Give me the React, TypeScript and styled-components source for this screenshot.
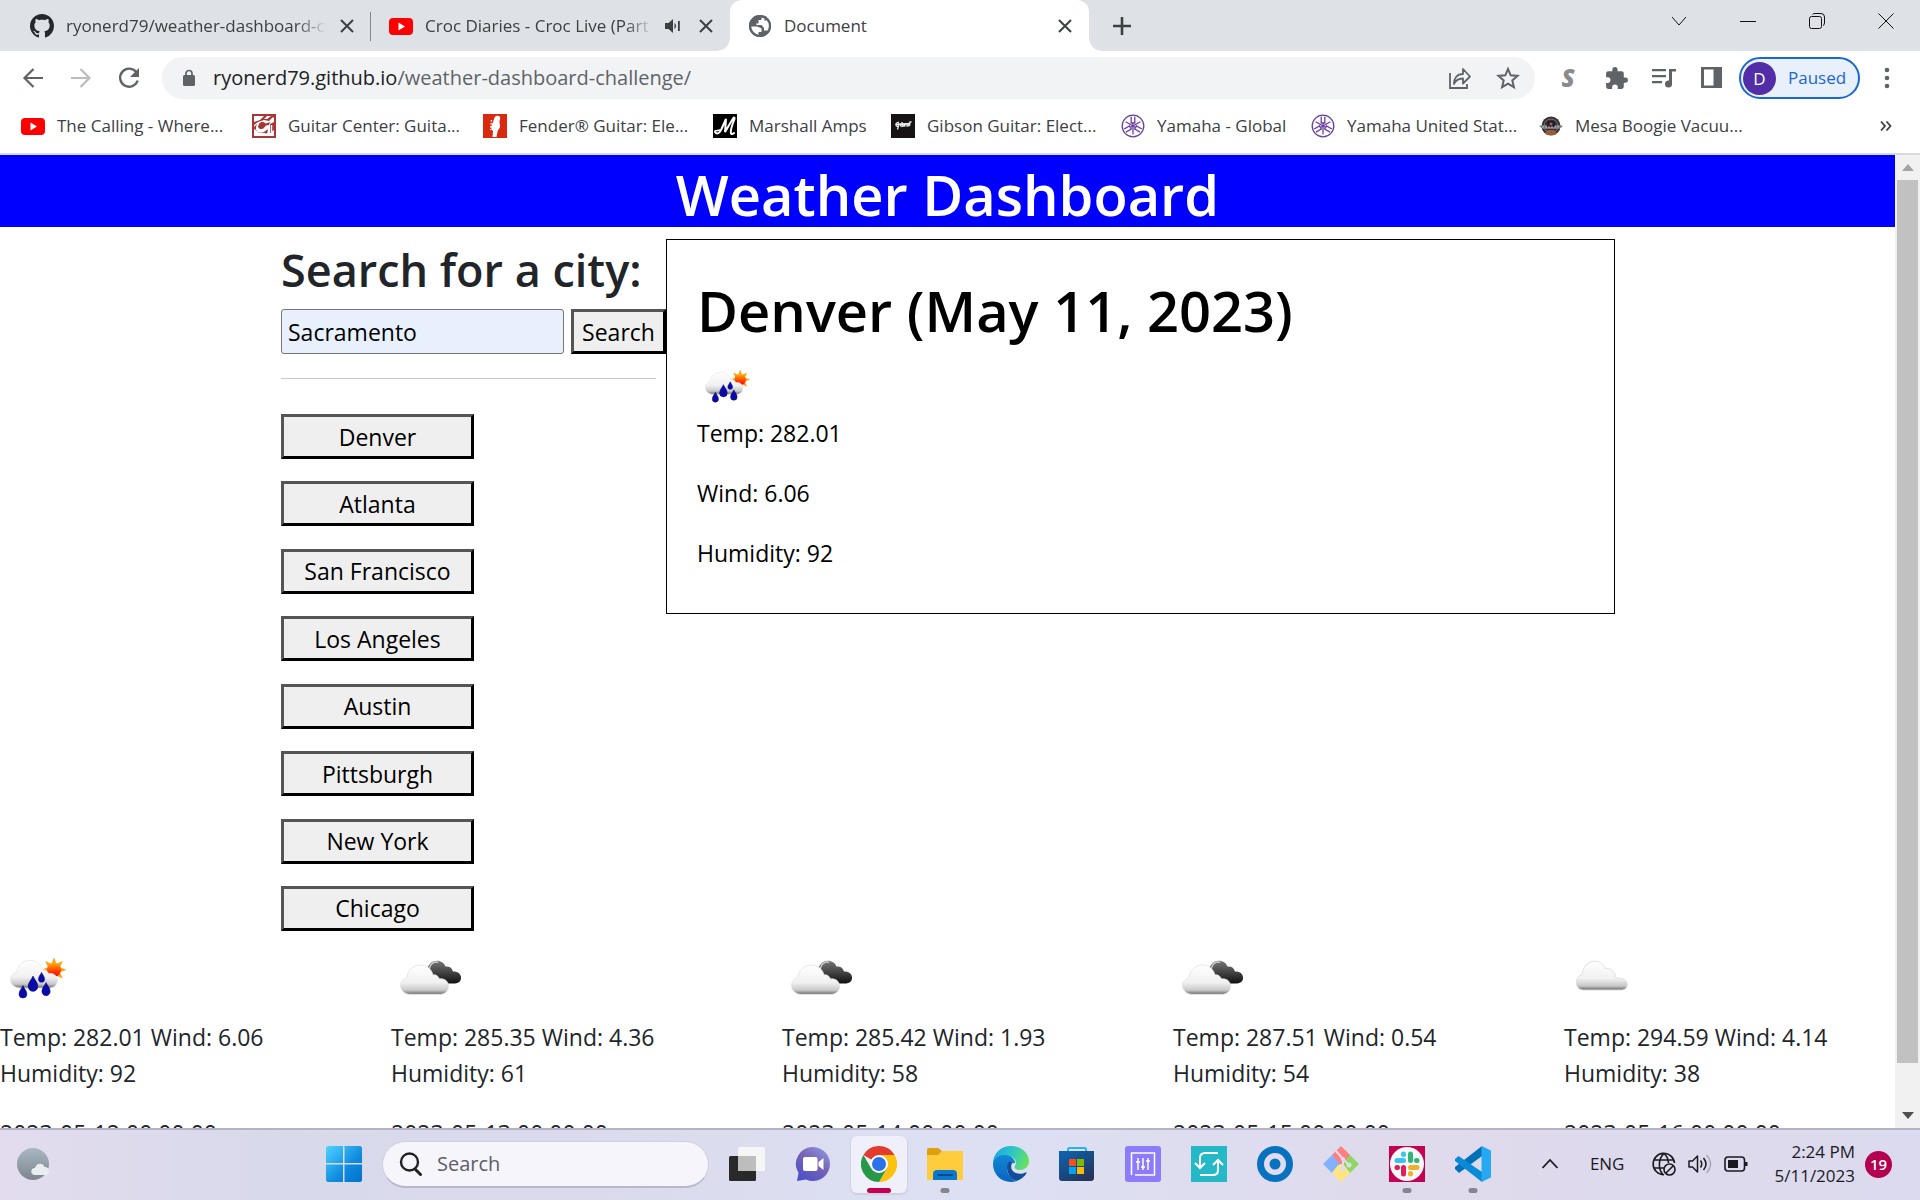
import React, { useId } from "react";
import styled, { createGlobalStyle, css } from "styled-components";

const GlobalStyle = createGlobalStyle`
  *, *::before, *::after { box-sizing: border-box; }
  body { margin: 0; background: #fff; font-family: "Open Sans", "Noto Sans", sans-serif; }
  h1, h2, p, ul { margin: 0; padding: 0; }
  button, input { font: inherit; color: inherit; margin: 0; }
  svg { display: block; flex: none; }
`;

/* ---------- shell ---------- */

const Shell = styled.div`
  display: grid;
  grid-template-columns: minmax(0, 1fr);
  grid-template-rows: auto minmax(0, 1fr) auto;
  height: 100vh;
  overflow: hidden;
`;

const IconButton = styled.button<{ $color?: string }>`
  display: flex;
  align-items: center;
  justify-content: center;
  width: 24px;
  height: 24px;
  padding: 0;
  border: 0;
  background: none;
  color: ${(p) => p.$color ?? "#5f6368"};
  flex: none;
`;

/* ---------- tab strip ---------- */

const TabStrip = styled.div`
  display: flex;
  align-items: stretch;
  height: 51px;
  padding-left: 12px;
  background: #dee1e6;
  color: #3c4043;
`;

const Tab = styled.div<{ $active?: boolean; $divided?: boolean }>`
  position: relative;
  display: flex;
  align-items: center;
  gap: 12px;
  flex: 0 1 359px;
  min-width: 0;
  padding: 0 16px 0 18px;
  font-size: 17px;
  line-height: 24px;
  ${(p) =>
    p.$divided &&
    css`
      &::after {
        content: "";
        position: absolute;
        right: 0;
        top: 12px;
        width: 1px;
        height: 29px;
        background: #80868b;
      }
    `}
  ${(p) =>
    p.$active &&
    css`
      background: #fff;
      border-radius: 12px 12px 0 0;
      &::before,
      &::after {
        content: "";
        position: absolute;
        bottom: 0;
        width: 12px;
        height: 12px;
      }
      &::before {
        left: -12px;
        background: radial-gradient(circle at 0 0, transparent 11px, #fff 12px);
      }
      &::after {
        right: -12px;
        background: radial-gradient(circle at 100% 0, transparent 11px, #fff 12px);
      }
    `}
`;

const TabTitle = styled.span<{ $fade?: boolean }>`
  flex: 1;
  min-width: 0;
  overflow: hidden;
  white-space: nowrap;
  ${(p) => p.$fade && css`mask-image: linear-gradient(90deg, #000 88%, transparent);`}
`;

const TabActions = styled.div`
  display: flex;
  gap: 17px;
`;

const TabButton = styled(IconButton)`
  width: 16px;
`;

const NewTab = styled(IconButton)`
  align-self: center;
  margin-left: 21px;
`;

const WindowControls = styled.div`
  display: flex;
  align-items: center;
  gap: 45px;
  height: 42px;
  margin-left: auto;
  padding-right: 22px;
`;

/* ---------- toolbar ---------- */

const Toolbar = styled.div`
  display: flex;
  align-items: center;
  height: 54px;
  padding: 0 21px;
  background: #fff;
`;

const ToolGroup = styled.div`
  display: flex;
  align-items: center;
  gap: 24px;
`;

const AddressBar = styled.div`
  display: flex;
  align-items: center;
  gap: 18px;
  flex: 1;
  min-width: 0;
  height: 42px;
  margin: 0 21px;
  padding: 0 15px 0 21px;
  border-radius: 21px;
  background: #f1f3f4;
`;

const Url = styled.span`
  flex: 1;
  min-width: 0;
  overflow: hidden;
  white-space: nowrap;
  font-size: 20px;
  line-height: 30px;
  color: #5f6368;
  b { font-weight: 400; color: #202124; }
`;

const ProfileButton = styled.button`
  display: flex;
  align-items: center;
  gap: 12px;
  width: 121px;
  height: 42px;
  margin: 0 15px;
  padding: 0 0 0 2px;
  border: 2px solid #1a67d2;
  border-radius: 21px;
  background: #e8f0fb;
  color: #1967d2;
  font-size: 17px;
  line-height: 24px;
`;

const Avatar = styled.span`
  width: 33px;
  height: 33px;
  border-radius: 50%;
  background: #512da8;
  color: #fff;
  font-size: 17px;
  line-height: 33px;
  text-align: center;
`;

/* ---------- bookmarks ---------- */

const BookmarkBar = styled.nav`
  display: flex;
  align-items: center;
  height: 50px;
  padding: 0 22px 6px 21px;
  border-bottom: 2px solid #d9dadc;
  background: #fff;
  color: #3c4043;
  font-size: 17px;
  line-height: 24px;
`;

const Bookmark = styled.a<{ $width: number }>`
  display: flex;
  align-items: center;
  gap: 12px;
  flex: 0 1 ${(p) => p.$width}px;
  min-width: 0;
  color: inherit;
  text-decoration: none;
  white-space: nowrap;
`;

const MoreBookmarks = styled(IconButton)`
  margin-left: auto;
`;

/* ---------- page ---------- */

const Viewport = styled.div`
  display: flex;
  min-height: 0;
`;

const Page = styled.main`
  flex: 1;
  min-width: 0;
  overflow: hidden;
  background: #fff;
  color: #212529;
  font-size: 23px;
  line-height: 36px;
`;

const Banner = styled.h1`
  background: #00f;
  color: #fff;
  font-size: 56px;
  font-weight: 600;
  line-height: 72px;
  height: 72px;
  padding-top: 3px;
  text-align: center;
`;

const Columns = styled.div`
  display: flex;
  align-items: flex-start;
  padding: 12px 0 0 281px;
`;

const Sidebar = styled.section`
  flex: 0 0 385px;
  min-width: 0;
  padding-top: 2px;
`;

const SearchTitle = styled.h2`
  font-size: 45px;
  font-weight: 600;
  line-height: 58px;
  white-space: nowrap;
`;

const SearchForm = styled.form`
  display: flex;
  gap: 7px;
  width: 385px;
  margin-top: 10px;
`;

const CityInput = styled.input`
  flex: 1;
  width: 0;
  min-width: 0;
  height: 45px;
  padding: 0 6px;
  border: 1px solid #767676;
  border-radius: 3px;
  background: #e8f0fe;
  color: #000;
`;

const ClassicButton = styled.button<{ $width: number }>`
  width: ${(p) => p.$width}px;
  height: 45px;
  padding: 0;
  border: 3px solid;
  border-color: #555 #000 #000 #555;
  background: #efefef;
  color: #000;
  line-height: 36px;
`;

const Rule = styled.hr`
  height: 1px;
  margin: 24px 10px 35px 0;
  border: 0;
  background: #c8c9ca;
`;

const History = styled.ul`
  display: flex;
  flex-direction: column;
  justify-content: space-between;
  height: 517px;
  list-style: none;
  li { display: flex; }
`;

const Current = styled.section`
  flex: 0 1 949px;
  height: 375px;
  padding: 37px 30px;
  border: 1px solid #000;
  color: #000;
`;

const CurrentTitle = styled.h2`
  font-size: 56px;
  font-weight: 600;
  line-height: 66px;
`;

const CurrentIcon = styled.div`
  display: flex;
  align-items: flex-end;
  height: 72px;
`;

const Reading = styled.p`
  line-height: 36px;
  margin-bottom: 24px;
`;

const Forecast = styled.section`
  display: grid;
  grid-template-columns: repeat(5, minmax(0, 1fr));
  column-gap: 60px;
  margin-top: 8px;
`;

const ForecastDay = styled.article`
  p { padding-right: 50px; margin-bottom: 24px; }
`;

const ForecastIcon = styled.div`
  height: 80px;
`;

/* ---------- scrollbar ---------- */

const ScrollTrack = styled.div`
  display: flex;
  flex-direction: column;
  align-items: center;
  flex: 0 0 25px;
  background: #f1f1f1;
`;

const ScrollThumb = styled.div`
  width: 21px;
  flex: 0 1 883px;
  background: #c1c1c1;
`;

const ScrollArrow = styled(IconButton)<{ $end?: boolean }>`
  height: 25px;
  margin-top: ${(p) => (p.$end ? "auto" : 0)};
`;

/* ---------- taskbar ---------- */

const Taskbar = styled.footer`
  display: flex;
  align-items: center;
  height: 72px;
  padding: 0 28px 2px 16px;
  border-top: 2px solid #b4b3c6;
  background: linear-gradient(90deg, #e2dcee 0, #d8d9eb 14%, #dadaec 30%, #dde0f3 50%, #dfdaec 75%, #dcdaee 100%);
  color: #1b1b1f;
`;

const Widgets = styled.div`
  flex: 0 0 300px;
`;

const Apps = styled.div`
  display: flex;
  align-items: center;
  gap: 10px;
`;

const AppButton = styled.button<{ $active?: boolean }>`
  position: relative;
  display: flex;
  align-items: center;
  justify-content: center;
  width: 56px;
  height: 57px;
  padding: 0;
  border: 0;
  border-radius: 6px;
  background: ${(p) => (p.$active ? "#f0f0fa" : "none")};
  box-shadow: ${(p) => (p.$active ? "0 1px 1px 1px #d0d0e2" : "none")};
`;

const RunMark = styled.span<{ $active?: boolean }>`
  position: absolute;
  bottom: 0;
  left: 50%;
  transform: translateX(-50%);
  width: ${(p) => (p.$active ? 24 : 9)}px;
  height: 5px;
  border-radius: 3px;
  background: ${(p) => (p.$active ? "#c30052" : "#85848f")};
`;

const TaskSearch = styled.label`
  display: flex;
  align-items: center;
  gap: 14px;
  width: 327px;
  height: 47px;
  padding: 0 20px 0 16px;
  border: 1px solid #cfcfe0;
  border-bottom: 2px solid #b9b8cb;
  border-radius: 24px;
  background: #f5f5fb;
  input {
    width: 100%;
    padding: 0;
    border: 0;
    outline: 0;
    background: none;
    font-size: 20px;
    line-height: 30px;
  }
  input::placeholder { color: #5e5e66; opacity: 1; }
`;

const Tray = styled.div`
  display: flex;
  align-items: center;
  margin-left: auto;
`;

const TrayIcons = styled.div`
  display: flex;
  align-items: center;
  gap: 12px;
  margin: 0 26px 0 28px;
`;

const Language = styled.span`
  margin-left: 32px;
  font-size: 17px;
  line-height: 24px;
`;

const Clock = styled.time`
  font-size: 17px;
  line-height: 24px;
  text-align: right;
  span { display: block; }
`;

const Badge = styled.span`
  width: 27px;
  height: 27px;
  margin-left: 10px;
  border-radius: 50%;
  background: #b4004e;
  color: #fff;
  font-size: 15px;
  font-weight: 600;
  line-height: 27px;
  text-align: center;
`;

/* ---------- drawings ---------- */

const CloseIcon = () => (
  <svg width="16" height="16" viewBox="0 0 16 16" fill="none" stroke="#3c4043" strokeWidth="2">
    <path d="M2 2l12 12M14 2L2 14" />
  </svg>
);

const GithubIcon = () => (
  <svg width="24" height="24" viewBox="0 0 16 16" fill="#24292f">
    <path d="M8 0C3.58 0 0 3.58 0 8c0 3.54 2.29 6.53 5.47 7.59.4.07.55-.17.55-.38 0-.19-.01-.82-.01-1.49-2.01.37-2.53-.49-2.69-.94-.09-.23-.48-.94-.82-1.13-.28-.15-.68-.52-.01-.53.63-.01 1.08.58 1.23.82.72 1.21 1.87.87 2.33.66.07-.52.28-.87.51-1.07-1.78-.2-3.64-.89-3.64-3.95 0-.87.31-1.59.82-2.15-.08-.2-.36-1.02.08-2.12 0 0 .67-.21 2.2.82.64-.18 1.32-.27 2-.27s1.36.09 2 .27c1.53-1.04 2.2-.82 2.2-.82.44 1.1.16 1.92.08 2.12.51.56.82 1.27.82 2.15 0 3.07-1.87 3.75-3.65 3.95.29.25.54.73.54 1.48 0 1.07-.01 1.93-.01 2.2 0 .21.15.46.55.38A8.01 8.01 0 0016 8c0-4.42-3.58-8-8-8z" />
  </svg>
);

const YoutubeIcon = () => (
  <svg width="24" height="24" viewBox="0 0 24 24">
    <rect y="4" width="24" height="17" rx="4" fill="#f00" />
    <path d="M9.500 8.500v8l6.500-4z" fill="#fff" />
  </svg>
);

const GlobeIcon = () => (
  <svg width="24" height="24" viewBox="0 0 24 24">
    <circle cx="12" cy="12" r="11" fill="#5f6368" />
    <path d="M3 12.500h6.500l4 2v3.500h-3v3C6 20 3 17 3 12.500zM13.500 3.500v2.500h-3v3.500H8l.5 1.500h5l2.500 3v2.500h2.500l1 1c2.500-3 3-8-.5-11.500l-2.500 1V4.500z" fill="#fff" />
    <circle cx="12" cy="12" r="10" fill="none" stroke="#5f6368" strokeWidth="2.200" />
  </svg>
);

const AudioIcon = () => (
  <svg width="16" height="16" viewBox="0 0 16 16" fill="#3c4043">
    <path d="M0 5h3.500L8 1v14l-4.500-4H0zM9.500 5c2 1 2 5 0 6zM13 3h1.800v10H13z" />
  </svg>
);

const BackIcon = () => (
  <svg width="24" height="24" viewBox="0 0 24 24" fill="none" stroke="currentColor" strokeWidth="2.200">
    <path d="M22 12H3.500M12.500 3l-9 9 9 9" />
  </svg>
);
const ForwardIcon = () => (
  <svg width="24" height="24" viewBox="0 0 24 24" fill="none" stroke="currentColor" strokeWidth="2.200">
    <path d="M2 12h18.500M11.500 3l9 9-9 9" />
  </svg>
);
const ReloadIcon = () => (
  <svg width="24" height="24" viewBox="0 0 24 24">
    <path d="M19.500 6.500A9 9 0 1020.700 14.500" fill="none" stroke="currentColor" strokeWidth="2.300" />
    <path d="M22 2v9h-9z" fill="currentColor" />
  </svg>
);
const LockIcon = () => (
  <svg width="12" height="18" viewBox="0 0 12 18">
    <rect y="6" width="12" height="11" rx="1.500" fill="#5f6368" />
    <path d="M3 7V4.500a3 3 0 016 0V7" fill="none" stroke="#5f6368" strokeWidth="1.700" />
  </svg>
);
const ShareIcon = () => (
  <svg width="24" height="24" viewBox="0 0 24 24" fill="none" stroke="#5f6368" strokeWidth="1.800">
    <path d="M2 7v15h17v-4" />
    <path d="M6 18c0-6 3-10 9-10V3l7 7.500-7 7v-5c-4 0-7 1-9 5.500z" strokeLinejoin="round" />
  </svg>
);
const StarIcon = () => (
  <svg width="24" height="24" viewBox="0 0 24 24" fill="none" stroke="#5f6368" strokeWidth="2">
    <path d="M12 3l2.700 6.300 6.800.6-5.200 4.500 1.600 6.700-5.900-3.500-5.900 3.500 1.600-6.700-5.200-4.500 6.800-.6z" />
  </svg>
);
const LetterS = styled.span`
  font-family: "Open Sans", sans-serif;
  font-size: 24px;
  font-weight: 800;
  font-style: italic;
  line-height: 24px;
  color: #8b8b8b;
`;
const PuzzleIcon = () => (
  <svg width="25" height="25" viewBox="0 0 24 24" fill="currentColor">
    <path d="M20.500 11H19V7a2 2 0 00-2-2h-4V3.500a2.500 2.500 0 00-5 0V5H4a2 2 0 00-2 2v3.800h1.500a2.700 2.700 0 010 5.400H2V20a2 2 0 002 2h3.800v-1.500a2.700 2.700 0 015.400 0V22H17a2 2 0 002-2v-4h1.500a2.500 2.500 0 000-5z" />
  </svg>
);
const QueueIcon = () => (
  <svg width="24" height="24" viewBox="0 0 24 24" fill="currentColor">
    <path d="M0 3h14v2.200H0zM0 9h14v2.200H0zM0 15h10v2.200H0z" />
    <path d="M17 3h7v2.500h-4V18h-3z" />
    <circle cx="16.500" cy="18" r="3.500" />
  </svg>
);
const PanelIcon = () => (
  <svg width="24" height="24" viewBox="0 0 24 24">
    <rect x="1" y="1" width="21" height="21" fill="#5f6368" />
    <rect x="4" y="3.500" width="9.500" height="16" fill="#fff" />
  </svg>
);
const DotsIcon = () => (
  <svg width="24" height="24" viewBox="0 0 24 24" fill="currentColor">
    <circle cx="12" cy="4" r="2.300" />
    <circle cx="12" cy="12" r="2.300" />
    <circle cx="12" cy="20" r="2.300" />
  </svg>
);

const GuitarCenterIcon = () => (
  <svg width="24" height="24" viewBox="0 0 24 24">
    <rect width="24" height="24" fill="#a93636" />
    <path d="M2 2h10L8 6 2 8zM15 2h4l-4 3h-3zM2 11l4-3 6-2 5 1 4-4 1 1v4l-4 2v10l-3 1 1-6-4 3c-5 2-9-1-8-5l1-3-3 3z" fill="#fff" />
    <path d="M2 15c3 1 3 4 7 4s5 0 8 1l5-4v6H2z" fill="#fff" />
    <path d="M7 10c2-3 5-2 7-.5l4-1.500-1 3c-3 0-4 1-5 3-2 2-6 1-6-1.500z" fill="#a93636" />
    <path d="M19.500 11v7" stroke="#fff" strokeWidth="1.500" />
  </svg>
);
const FenderIcon = () => (
  <svg width="24" height="24" viewBox="0 0 24 24">
    <rect width="24" height="24" fill="#d9290f" />
    <path d="M13 2c3-1 5 1 4 3.500-1.500 3 .5 4 0 7-.4 3-2.500 3-2.500 5.500l-1 5H9.500l.5-6C7 15 8.500 11 10 8c1-2 1-5 3-6z" fill="#fff" />
    <path d="M8.500 6l-1 10" stroke="#fff" strokeWidth="1.500" strokeDasharray="1.500 1.500" />
  </svg>
);
const MarshallIcon = () => (
  <svg width="24" height="24" viewBox="0 0 24 24" fill="none" stroke="#fff" strokeLinecap="round">
    <rect width="24" height="24" fill="#000" stroke="none" />
    <path d="M2 18c2 3 5 1 6.500-3L13 5l-1 13L20 4.500c1-1.500 2-1 1.500.5-2 5-4.500 12-3.500 14.500.5 1 2 .5 3-.5" strokeWidth="2" />
    <path d="M2 17l5-1" strokeWidth="1.500" />
  </svg>
);
const GibsonIcon = () => (
  <svg width="24" height="24" viewBox="0 0 24 24" fill="none" stroke="#eee" strokeWidth="1.300">
    <rect width="24" height="24" fill="#171315" stroke="none" />
    <path d="M8 8.500c-4-.5-4 4-1 4l1-3-1.500 6M9.500 9.500v3M11 8v4.500l2-.5v-2l-2 .5M14.500 10l-1 2.500M16 10v2l2-.3v-2zM18.500 12l.5-4 1.500 0" />
    <path d="M5 10.500l14-1" strokeWidth="1.500" />
  </svg>
);
const YamahaIcon = () => (
  <svg width="24" height="24" viewBox="0 0 24 24" fill="none" stroke="#6a3fa0" strokeWidth="1">
    <circle cx="12" cy="12" r="10.800" strokeWidth="1.300" />
    {[0, 120, 240].map((a) => (
      <g key={a} transform={`rotate(${a} 12 12)`}>
        <path d="M12 20.500V9M10.200 2.800V9h3.600V2.800" strokeWidth="1.300" />
      </g>
    ))}
  </svg>
);
const MesaIcon = () => (
  <svg width="24" height="24" viewBox="0 0 24 24">
    <circle cx="12" cy="12" r="9.500" fill="#38302e" />
    <circle cx="12" cy="12" r="7" fill="none" stroke="#8b7468" />
    <path d="M6 19l3-3h6l3 3-2 2H8z" fill="#9a5a3c" />
    <path d="M0 12l4-1h16l4 1-4 3H4z" fill="#77787c" />
    <path d="M8 7h8v6H8z" fill="#1b2036" />
    <circle cx="12" cy="10" r="1.500" fill="#c55448" />
    <path d="M3 13h18" stroke="#bbb" strokeWidth="1" strokeDasharray="2 1" />
  </svg>
);

const CLOUD = "M11 32c-4 0-7-3-7-6.500 0-3 2-5.500 4.500-6C9 14 13 10 18 10c4.500 0 8 3 9 7.500 2-.5 4 1 4.500 3 3.500-.5 6.500 1.500 6.500 5.500s-3 6-6 6z";

function CloudGradients({ id }: { id: string }) {
  return (
    <defs>
      <linearGradient id={`${id}w`} x1="0" y1="0" x2="0" y2="1">
        <stop offset="0" stopColor="#fff" />
        <stop offset=".6" stopColor="#f1f1f1" />
        <stop offset=".86" stopColor="#c8c8c8" />
        <stop offset="1" stopColor="#6a6a6a" />
      </linearGradient>
      <linearGradient id={`${id}d`} x1="0" y1="0" x2="0" y2="1">
        <stop offset="0" stopColor="#777" />
        <stop offset=".5" stopColor="#444" />
        <stop offset="1" stopColor="#111" />
      </linearGradient>
      <linearGradient id={`${id}s`} x1="0" y1="0" x2="0" y2="1">
        <stop offset="0" stopColor="#ffb400" />
        <stop offset=".6" stopColor="#ff3c00" />
        <stop offset="1" stopColor="#f00" />
      </linearGradient>
    </defs>
  );
}

const RAYS = [0, 45, 90, 135, 180, 225, 270, 315];

function RainIcon({ size }: { size: number }) {
  const id = useId().replace(/[^a-z0-9]/gi, "");
  return (
    <svg width={size} height={size} viewBox="0 0 50 50">
      <CloudGradients id={id} />
      {RAYS.map((a) => (
        <path key={a} d="M34.400 16.500L36 12.200l1.600 4.300z" transform={`rotate(${a} 36 20.500)`} fill="#ff9f1a" />
      ))}
      <circle cx="36" cy="20.500" r="4.700" fill={`url(#${id}s)`} />
      <path d={CLOUD} transform="translate(3.300 5.800) scale(.92 .84)" fill={`url(#${id}w)`} stroke="#e6e6e6" strokeWidth=".6" />
      {[
        [22, 24.700, 1],
        [27.700, 22.200, 0.65],
        [15.300, 31, 0.82],
        [30.700, 29, 0.86],
      ].map(([x, y, s]) => (
        <path key={`${x}`} transform={`translate(${x} ${y}) scale(${s})`} d="M0 0c1 2.500 3.200 4.200 3.200 7a3.200 3.200 0 01-6.400 0C-3.200 4.200-1 2.500 0 0z" fill="#0a0aa8" stroke="#000070" strokeWidth=".4" />
      ))}
    </svg>
  );
}

function BrokenCloudsIcon({ size }: { size: number }) {
  const id = useId().replace(/[^a-z0-9]/gi, "");
  return (
    <svg width={size} height={size} viewBox="0 0 50 50">
      <CloudGradients id={id} />
      <path d="M24 22c0-5 4-8.500 8.500-7.200 2.500.7 3.300 2 3.800 3.500 2.700-.3 4.500 1 5 3.400 3.200-.2 5.400 1.500 5.400 4.200 0 2.500-2 3.700-4 3.700H31z" fill={`url(#${id}d)`} />
      <path d="M25.500 20c.5-3.500 3-5 6-4.500" fill="none" stroke="#ccc" strokeWidth="1" />
      <path d={CLOUD} transform="translate(2.600 8.400) scale(.94 .89)" fill={`url(#${id}w)`} stroke="#e2e2e2" strokeWidth=".6" />
    </svg>
  );
}

function CloudIcon({ size }: { size: number }) {
  const id = useId().replace(/[^a-z0-9]/gi, "");
  return (
    <svg width={size} height={size} viewBox="0 0 50 50">
      <CloudGradients id={id} />
      <path d="M13 34c-3 0-4.800-2.300-4.800-5 0-2.600 1.800-5 4-5.500.3-5 3.800-8.700 8-8.700 3.500 0 6.300 2 7.300 4.800 3.500-.3 6.300 1.600 6.800 5.200l.7 1.200c4 0 7.200 1 7.200 4.300 0 2-1.400 3.700-3.700 3.700z" fill={`url(#${id}w)`} stroke="#dcdcdc" strokeWidth=".6" />
    </svg>
  );
}

/* taskbar logos */

const StartIcon = () => (
  <svg width="36" height="36" viewBox="0 0 36 36">
    <defs>
      <linearGradient id="start" x1="0" y1="0" x2="1" y2="1">
        <stop offset="0" stopColor="#4fd5ff" />
        <stop offset=".6" stopColor="#0f8ade" />
        <stop offset="1" stopColor="#0071cf" />
      </linearGradient>
    </defs>
    <path d="M1.500 0H17v17H0V1.500zM18.500 0h16L36 1.500V17H18.500zM0 18.500h17V36H1.500L0 34.500zM18.500 18.500H36v16L34.500 36h-16z" fill="url(#start)" />
  </svg>
);
const WeatherWidgetIcon = () => (
  <svg width="36" height="36" viewBox="0 0 36 36">
    <defs>
      <linearGradient id="moon" x1="0" y1="0" x2="0" y2="1">
        <stop offset="0" stopColor="#a9b8c4" />
        <stop offset="1" stopColor="#7d858d" />
      </linearGradient>
    </defs>
    <circle cx="17" cy="18" r="16" fill="url(#moon)" />
    <path d="M19 29c-5 0-5-7 0-7 1-5 8-6 9.500-1 6 0 6 8 1 8z" fill="#e9edf0" />
  </svg>
);
const SearchIcon = () => (
  <svg width="24" height="24" viewBox="0 0 24 24" fill="none" stroke="#222" strokeWidth="2.400" strokeLinecap="round">
    <circle cx="10.500" cy="10" r="8.500" />
    <path d="M16 17l5.500 5.500" strokeWidth="3" />
  </svg>
);
const TaskViewIcon = () => (
  <svg width="36" height="36" viewBox="0 0 36 36">
    <rect y="10" width="27" height="25" rx="1.500" fill="#292929" />
    <rect x="9" y="1" width="27" height="24" rx="1.500" fill="#f6f6f6" />
    <rect x="9" y="10" width="18" height="15" fill="#bdbdbd" />
  </svg>
);
const ChatIcon = () => (
  <svg width="36" height="36" viewBox="0 0 36 36">
    <defs>
      <linearGradient id="chat" x1="1" y1="0" x2=".3" y2="1">
        <stop offset="0" stopColor="#8ea3ee" />
        <stop offset=".5" stopColor="#7a64b4" />
        <stop offset="1" stopColor="#4f52c8" />
      </linearGradient>
    </defs>
    <path d="M18 1a17 17 0 11-7 32.500L2 35l1.500-8A17 17 0 0118 1z" fill="url(#chat)" />
    <rect x="8" y="11" width="14.500" height="14" rx="2" fill="#fff" />
    <path d="M23.500 16l5-4v12l-5-4z" fill="#fff" />
  </svg>
);
const ChromeIcon = () => (
  <svg width="36" height="36" viewBox="0 0 36 36">
    <path d="M18 18L2.400 9A18 18 0 0133.600 9z" fill="#e33b2e" />
    <path d="M18 18V9h15.600A18 18 0 0118 36l7.800-13.500z" fill="#fdc10f" />
    <path d="M18 18l7.800 4.500L18 36A18 18 0 012.400 9l7.800 13.500z" fill="#269847" />
    <circle cx="18" cy="18" r="9" fill="#fff" />
    <circle cx="18" cy="18" r="7" fill="#2a72ea" />
  </svg>
);
const ExplorerIcon = () => (
  <svg width="36" height="36" viewBox="0 0 36 36">
    <path d="M0 4a2 2 0 012-2h9l4 3h19a2 2 0 012 2v8H0z" fill="#dea10b" />
    <path d="M0 9h11l4-4h21v28a1 1 0 01-1 1H1a1 1 0 01-1-1z" fill="#ffcc3d" />
    <path d="M6 34v-6a4 4 0 014-4h16a4 4 0 014 4v6z" fill="#0b78cf" />
    <path d="M11 29h14" stroke="#084c8c" strokeWidth="2" strokeLinecap="round" />
  </svg>
);
const EdgeIcon = () => (
  <svg width="36" height="36" viewBox="0 0 36 36">
    <defs>
      <linearGradient id="edgeTop" x1="0" y1=".3" x2="1" y2=".6">
        <stop offset="0" stopColor="#1aa7e6" />
        <stop offset=".5" stopColor="#30c7c4" />
        <stop offset="1" stopColor="#67e35a" />
      </linearGradient>
      <linearGradient id="edgeSide" x1="0" y1="0" x2="0" y2="1">
        <stop offset="0" stopColor="#1089d6" />
        <stop offset="1" stopColor="#0b63c0" />
      </linearGradient>
    </defs>
    <path d="M0 18C0 7 8 0 18 0c11 0 18 8 18 15 0 6-5 9-9 9-5 0-6-2-5-4 3-6-2-10-9-10C6 10 0 14 0 18z" fill="url(#edgeTop)" />
    <path d="M0 18c0-5 5-9 11-9 7 0 11 4 11 8-8-1-10 8-5 13 2 3 5 5 7 5-13 4-24-5-24-17z" fill="url(#edgeSide)" />
    <path d="M17 15c-5 4-4 15 6 20 5-1 9-5 10.500-8 .4-.8-.4-1-1-.6C26 30 15 26 19 17z" fill="#114e98" />
  </svg>
);
const StoreIcon = () => (
  <svg width="36" height="36" viewBox="0 0 36 36">
    <defs>
      <linearGradient id="store" x1="0" y1="0" x2=".7" y2="1">
        <stop offset="0" stopColor="#0a66b4" />
        <stop offset="1" stopColor="#25355b" />
      </linearGradient>
    </defs>
    <path d="M9 8V3.500A1.500 1.500 0 0110.500 2h15A1.500 1.500 0 0127 3.500V8" fill="none" stroke="#1fb5f5" strokeWidth="2" />
    <path d="M0 5h35v27a3 3 0 01-3 3H3a3 3 0 01-3-3z" fill="url(#store)" />
    <path d="M10 13h7v7h-7z" fill="#f25022" />
    <path d="M18 13h7v7h-7z" fill="#7fba00" />
    <path d="M10 21h7v7h-7z" fill="#00a4ef" />
    <path d="M18 21h7v7h-7z" fill="#ffb900" />
  </svg>
);
const MixerIcon = () => (
  <svg width="36" height="36" viewBox="0 0 36 36" fill="none" stroke="#fff" strokeWidth="1.500">
    <rect width="36" height="36" rx="3" fill="#8c7bfb" stroke="none" />
    <path d="M6.500 29V7h23v22H10" />
    <path d="M13 12v12M18 12v12M23 12v12M11 16h4M16 21h4M21 15h4" />
  </svg>
);
const SyncIcon = () => (
  <svg width="36" height="36" viewBox="0 0 36 36" fill="none" stroke="#fff" strokeWidth="2">
    <rect width="36" height="36" fill="#25b9c8" stroke="none" />
    <path d="M27 7H14q-5 0-5 5v10M4 17l5 5 5-5M9 29h13q5 0 5-5V14M22 19l5-5 5 5" />
  </svg>
);
const RingIcon = () => (
  <svg width="36" height="36" viewBox="0 0 36 36">
    <circle cx="18" cy="18" r="14.500" fill="none" stroke="#0872c0" strokeWidth="7" />
    <circle cx="18" cy="18" r="5.500" fill="#0872c0" />
  </svg>
);
const GitIcon = () => (
  <svg width="36" height="36" viewBox="0 0 36 36">
    <path d="M18 0l9 9-6 9h-6L9 9z" fill="#ff7f80" />
    <path d="M9 9l8 9-8 9-9-9z" fill="#82b1ff" />
    <path d="M27 9l9 9-9 9-8-9z" fill="#8fd663" />
    <path d="M18 36l-9-9 6-8h6l6 8z" fill="#ffe57f" />
    <path d="M13 5l7 8v9M20 13l5 5" stroke="#dfdcee" strokeWidth="2" fill="none" />
    <circle cx="20" cy="13" r="2" fill="#dfdcee" />
    <circle cx="20" cy="23" r="2.500" fill="#dfdcee" />
    <circle cx="26" cy="19" r="2.500" fill="#dfdcee" />
  </svg>
);
const SlackIcon = () => (
  <svg width="36" height="36" viewBox="0 0 36 36">
    <rect width="36" height="36" fill="#c30052" />
    <circle cx="18" cy="18" r="17" fill="#f7f7f7" />
    <g strokeWidth="5" strokeLinecap="round" fill="none">
      <path d="M8 14.500h6.500M14.500 8v.5" stroke="#36c5f0" />
      <path d="M21.500 8v6.500M28 14.500h-.5" stroke="#2eb67d" />
      <path d="M28 21.500h-6.500M21.500 28v-.5" stroke="#ecb22e" />
      <path d="M14.500 28v-6.500M8 21.500h.5" stroke="#e01e5a" />
    </g>
  </svg>
);
const CodeIcon = () => (
  <svg width="36" height="36" viewBox="0 0 36 36">
    <path d="M27 0v10L4 27l-4-4v-2z" fill="#0070b8" />
    <path d="M0 13l3.500-3L27 26v10L0 15z" fill="#0a8bd8" />
    <path d="M26.500 0L36 4.500v27L26.500 36z" fill="#26a9f2" />
  </svg>
);

/* ---------- data ---------- */

const bookmarks = [
  { name: "The Calling - Where...", width: 231, Icon: YoutubeIcon },
  { name: "Guitar Center: Guita...", width: 231, Icon: GuitarCenterIcon },
  { name: "Fender® Guitar: Ele...", width: 230, Icon: FenderIcon },
  { name: "Marshall Amps", width: 178, Icon: MarshallIcon },
  { name: "Gibson Guitar: Elect...", width: 230, Icon: GibsonIcon },
  { name: "Yamaha - Global", width: 190, Icon: YamahaIcon },
  { name: "Yamaha United Stat...", width: 228, Icon: YamahaIcon },
  { name: "Mesa Boogie Vacuu...", width: 231, Icon: MesaIcon },
];

const cities = ["Denver", "Atlanta", "San Francisco", "Los Angeles", "Austin", "Pittsburgh", "New York", "Chicago"];

const forecast = [
  { temp: "282.01", wind: "6.06", humidity: 92, date: "2023-05-12 00:00:00", Icon: RainIcon },
  { temp: "285.35", wind: "4.36", humidity: 61, date: "2023-05-13 00:00:00", Icon: BrokenCloudsIcon },
  { temp: "285.42", wind: "1.93", humidity: 58, date: "2023-05-14 00:00:00", Icon: BrokenCloudsIcon },
  { temp: "287.51", wind: "0.54", humidity: 54, date: "2023-05-15 00:00:00", Icon: BrokenCloudsIcon },
  { temp: "294.59", wind: "4.14", humidity: 38, date: "2023-05-16 00:00:00", Icon: CloudIcon },
];

const apps = [
  { name: "Task view", Icon: TaskViewIcon },
  { name: "Chat", Icon: ChatIcon },
  { name: "Chrome", Icon: ChromeIcon, active: true, running: true },
  { name: "File Explorer", Icon: ExplorerIcon, running: true },
  { name: "Edge", Icon: EdgeIcon },
  { name: "Store", Icon: StoreIcon },
  { name: "Mixer", Icon: MixerIcon },
  { name: "Sync", Icon: SyncIcon },
  { name: "Ring", Icon: RingIcon },
  { name: "Git", Icon: GitIcon },
  { name: "Slack", Icon: SlackIcon, running: true },
  { name: "Code", Icon: CodeIcon, running: true },
];

/* ---------- sections ---------- */

function BrowserChrome() {
  return (
    <header>
      <TabStrip>
        <Tab $divided>
          <GithubIcon />
          <TabTitle $fade>ryonerd79/weather-dashboard-ch</TabTitle>
          <TabButton aria-label="Close tab"><CloseIcon /></TabButton>
        </Tab>
        <Tab>
          <YoutubeIcon />
          <TabTitle $fade>Croc Diaries - Croc Live (Part</TabTitle>
          <TabActions>
            <TabButton aria-label="Mute tab"><AudioIcon /></TabButton>
            <TabButton aria-label="Close tab"><CloseIcon /></TabButton>
          </TabActions>
        </Tab>
        <Tab $active>
          <GlobeIcon />
          <TabTitle>Document</TabTitle>
          <TabButton aria-label="Close tab"><CloseIcon /></TabButton>
        </Tab>
        <NewTab aria-label="New tab">
          <svg width="20" height="20" viewBox="0 0 20 20" stroke="#3c4043" strokeWidth="2.600">
            <path d="M10 1v18M1 10h18" />
          </svg>
        </NewTab>
        <WindowControls>
          <IconButton aria-label="Search tabs">
            <svg width="16" height="16" viewBox="0 0 16 16" fill="none" stroke="#111"><path d="M1 4l7 8 7-8" /></svg>
          </IconButton>
          <IconButton aria-label="Minimize">
            <svg width="16" height="16" viewBox="0 0 16 16" fill="none" stroke="#111"><path d="M0 8.500h16" /></svg>
          </IconButton>
          <IconButton aria-label="Restore">
            <svg width="16" height="16" viewBox="0 0 16 16" fill="none" stroke="#111">
              <rect x=".5" y="3.500" width="12" height="12" rx="2" />
              <path d="M3.500 1.500Q4 .5 6 .5h6q3.500 0 3.500 3.500v6q0 2-1.500 2.500" />
            </svg>
          </IconButton>
          <IconButton aria-label="Close">
            <svg width="16" height="16" viewBox="0 0 16 16" fill="none" stroke="#111"><path d="M.5.5l15 15M15.500.5l-15 15" /></svg>
          </IconButton>
        </WindowControls>
      </TabStrip>

      <Toolbar>
        <ToolGroup>
          <IconButton aria-label="Back"><BackIcon /></IconButton>
          <IconButton aria-label="Forward" $color="#babcbe"><ForwardIcon /></IconButton>
          <IconButton aria-label="Reload"><ReloadIcon /></IconButton>
        </ToolGroup>
        <AddressBar>
          <LockIcon />
          <Url><b>ryonerd79.github.io</b>/weather-dashboard-challenge/</Url>
          <ToolGroup>
            <IconButton aria-label="Share"><ShareIcon /></IconButton>
            <IconButton aria-label="Bookmark"><StarIcon /></IconButton>
          </ToolGroup>
        </AddressBar>
        <ToolGroup>
          <IconButton aria-label="Extension"><LetterS>S</LetterS></IconButton>
          <IconButton aria-label="Extensions"><PuzzleIcon /></IconButton>
          <IconButton aria-label="Media"><QueueIcon /></IconButton>
          <IconButton aria-label="Side panel"><PanelIcon /></IconButton>
        </ToolGroup>
        <ProfileButton><Avatar>D</Avatar>Paused</ProfileButton>
        <IconButton aria-label="Menu"><DotsIcon /></IconButton>
      </Toolbar>

      <BookmarkBar>
        {bookmarks.map(({ name, width, Icon }) => (
          <Bookmark key={name} href="#" $width={width}><Icon />{name}</Bookmark>
        ))}
        <MoreBookmarks aria-label="More bookmarks">
          <svg width="12" height="12" viewBox="0 0 12 12" fill="none" stroke="#3c4043" strokeWidth="1.800"><path d="M1 1.500l4 4.500-4 4.500M6.500 1.500l4 4.500-4 4.500" /></svg>
        </MoreBookmarks>
      </BookmarkBar>
    </header>
  );
}

function Dashboard() {
  return (
    <Page>
      <Banner>Weather Dashboard</Banner>
      <Columns>
        <Sidebar>
          <SearchTitle><label htmlFor="city">Search for a city:</label></SearchTitle>
          <SearchForm onSubmit={(e) => e.preventDefault()}>
            <CityInput id="city" defaultValue="Sacramento" />
            <ClassicButton $width={95}>Search</ClassicButton>
          </SearchForm>
          <Rule />
          <History>
            {cities.map((city) => (
              <li key={city}><ClassicButton $width={193}>{city}</ClassicButton></li>
            ))}
          </History>
        </Sidebar>
        <Current>
          <CurrentTitle>Denver (May 11, 2023)</CurrentTitle>
          <CurrentIcon><RainIcon size={60} /></CurrentIcon>
          <Reading>Temp: 282.01</Reading>
          <Reading>Wind: 6.06</Reading>
          <Reading>Humidity: 92</Reading>
        </Current>
      </Columns>
      <Forecast>
        {forecast.map(({ temp, wind, humidity, date, Icon }) => (
          <ForecastDay key={date}>
            <ForecastIcon><Icon size={75} /></ForecastIcon>
            <p>Temp: {temp} Wind: {wind} Humidity: {humidity}</p>
            <p>{date}</p>
          </ForecastDay>
        ))}
      </Forecast>
    </Page>
  );
}

function WindowsTaskbar() {
  return (
    <Taskbar>
      <Widgets><WeatherWidgetIcon /></Widgets>
      <Apps>
        <AppButton aria-label="Start"><StartIcon /></AppButton>
        <TaskSearch>
          <SearchIcon />
          <input placeholder="Search" aria-label="Search" />
        </TaskSearch>
        {apps.map(({ name, Icon, active, running }) => (
          <AppButton key={name} aria-label={name} $active={active}>
            <Icon />
            {running && <RunMark $active={active} />}
          </AppButton>
        ))}
      </Apps>
      <Tray>
        <svg width="16" height="16" viewBox="0 0 16 16" fill="none" stroke="#1b1b1f" strokeWidth="1.800"><path d="M.5 12L8 4l7.500 8" /></svg>
        <Language>ENG</Language>
        <TrayIcons>
          <svg width="24" height="24" viewBox="0 0 24 24" fill="none" stroke="#1b1b1f" strokeWidth="1.600">
            <path d="M22.500 11A10.700 10.700 0 1012 22.700M2 8h20M2 16h10M12 1.300C6 7 6 17 11 22.700M12 1.300c3 3 4.500 6 4.500 9.700" />
            <circle cx="17.500" cy="17.500" r="5.500" />
            <path d="M14 21l7-7" />
          </svg>
          <svg width="24" height="24" viewBox="0 0 24 24" fill="none" stroke="#1b1b1f" strokeWidth="1.500" strokeLinejoin="round">
            <path d="M1 9h3.500L9.500 4v16l-5-5H1z" />
            <path d="M12.500 8.500q2.500 3.500 0 7M15.500 6q5 6 0 12" />
            <path d="M18.500 3q8 9 0 18" stroke="#a9a8b8" />
          </svg>
          <svg width="24" height="24" viewBox="0 0 24 24" fill="none" stroke="#1b1b1f" strokeWidth="1.600">
            <rect x="1" y="5" width="19.500" height="14" rx="3" />
            <rect x="4" y="8" width="10" height="8" fill="#1b1b1f" stroke="none" />
            <path d="M22 10v4" strokeWidth="3" />
          </svg>
        </TrayIcons>
        <Clock><span>2:24 PM</span><span>5/11/2023</span></Clock>
        <Badge>19</Badge>
      </Tray>
    </Taskbar>
  );
}

export default function App() {
  return (
    <>
      <GlobalStyle />
      <Shell>
        <BrowserChrome />
        <Viewport>
          <Dashboard />
          <ScrollTrack>
            <ScrollArrow aria-label="Scroll up">
              <svg width="12" height="7" viewBox="0 0 12 7" fill="#a3a3a3"><path d="M0 7l6-7 6 7z" /></svg>
            </ScrollArrow>
            <ScrollThumb />
            <ScrollArrow aria-label="Scroll down" $end>
              <svg width="12" height="7" viewBox="0 0 12 7" fill="#505050"><path d="M0 0l6 7 6-7z" /></svg>
            </ScrollArrow>
          </ScrollTrack>
        </Viewport>
        <WindowsTaskbar />
      </Shell>
    </>
  );
}
